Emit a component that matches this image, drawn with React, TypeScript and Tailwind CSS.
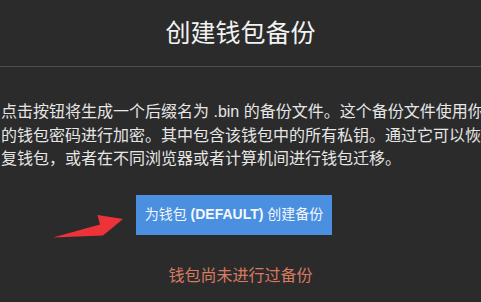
import React from 'react'

const font = { fontFamily: '"Liberation Sans", "Noto Sans CJK SC", sans-serif' }

function RedArrow() {
  // annotation arrow pointing at the button
  return (
    <svg className="absolute left-[50px] top-[212px]" width="78" height="30" viewBox="0 0 78 30">
      <polygon points="3,25.5 50,12.5 47.5,3 73,7 53,23.5" fill="#ee3338" />
    </svg>
  )
}

export default function App() {
  return (
    <div className="relative h-[302px] w-[481px] overflow-hidden bg-[#2b2b2b]" style={font}>
      <div className="flex h-[67px] items-center justify-center border-b border-[#4c4c4c]">
        <h1 className="text-[25px] leading-[34px] text-[#f2f2f2]">创建钱包备份</h1>
      </div>

      <p className="mt-[33px] w-[490px] pl-[1px] text-[16px] leading-[23.5px] text-[#e6e6e6]">
        点击按钮将生成一个后缀名为 .bin 的备份文件。这个备份文件使用你的钱包密码进行加密。其中包含该钱包中的所有私钥。通过它可以恢复钱包，或者在不同浏览器或者计算机间进行钱包迁移。
      </p>

      <div className="mt-[24px] flex justify-center pr-[13px]">
        <button className="flex h-[40px] w-[196px] items-center justify-center bg-[#4a8fe0] text-[14px] text-[#f4f8fd]">
          为钱包&nbsp;<span className="font-bold">(DEFAULT)</span>&nbsp;创建备份
        </button>
      </div>

      <p className="mt-[29px] text-center text-[16px] leading-[24px] text-[#d77a62]">钱包尚未进行过备份</p>

      <RedArrow />
    </div>
  )
}
